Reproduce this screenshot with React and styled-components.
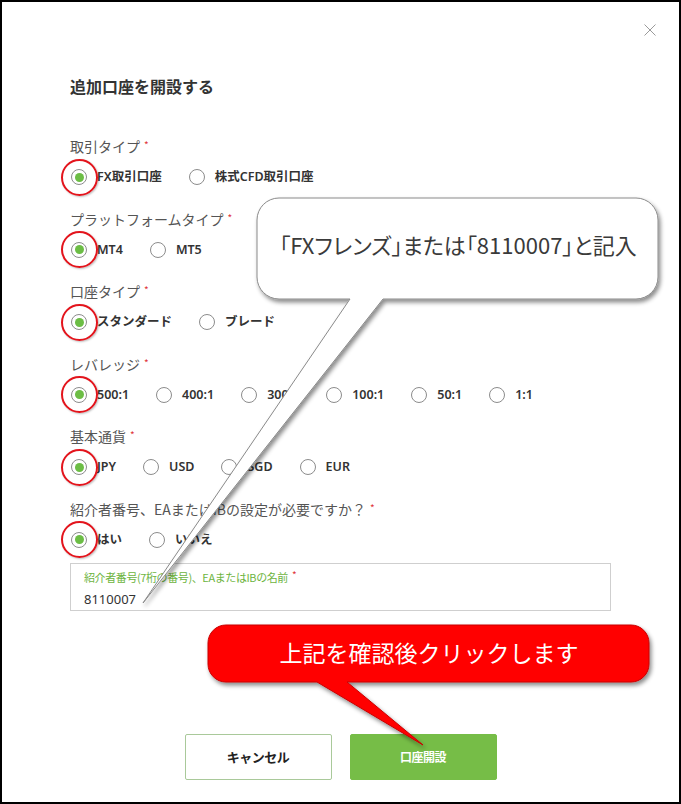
import React from "react";
import styled, { createGlobalStyle } from "styled-components";

const GlobalStyle = createGlobalStyle`
  html, body {
    margin: 0;
    padding: 0;
    background: #ffffff;
  }
  body {
    font-family: "Noto Sans", "Noto Sans CJK JP", sans-serif;
  }
`;

const Frame = styled.div`
  position: relative;
  width: 681px;
  height: 804px;
  box-sizing: border-box;
  border: 2px solid #000;
  background: #fff;
  overflow: hidden;
`;

const Modal = styled.div`
  display: flex;
  flex-direction: column;
  padding: 0 68px;
`;

const CloseRow = styled.div`
  display: flex;
  justify-content: flex-end;
  padding-top: 22px;
  margin-right: -45px;
`;

const CloseButton = styled.button`
  width: 12px;
  height: 12px;
  padding: 0;
  border: none;
  background: none;
  display: flex;
  svg {
    display: block;
  }
`;

const Title = styled.h2`
  margin: 39px 0 0;
  font-size: 16px;
  line-height: 22px;
  font-weight: 700;
  color: #333;
  font-family: "Noto Sans CJK JP", sans-serif;
`;

const Sections = styled.div`
  margin-top: 39px;
  display: flex;
  flex-direction: column;
`;

const Section = styled.div`
  display: flex;
  flex-direction: column;
  gap: 9px;
  margin-bottom: ${(p) => (p.$last ? "11px" : "19.5px")};
`;

const Label = styled.div`
  font-family: "Noto Sans CJK JP", sans-serif;
  font-size: 14px;
  line-height: 20px;
  height: 20px;
  color: #555;
`;

const Req = styled.span`
  position: relative;
  top: -3px;
  color: #e0343a;
  font-size: 10px;
  line-height: 0;
  margin-left: 4px;
`;

const RadioRow = styled.div`
  display: flex;
  align-items: center;
  height: 24px;
  gap: 27px;
  padding-left: 1px;
`;

const Option = styled.label`
  display: flex;
  align-items: center;
  gap: 10px;
  font-size: 12.5px;
  line-height: 18px;
  font-weight: 600;
  color: #333;
`;

const Circle = styled.span`
  position: relative;
  width: 16px;
  height: 16px;
  box-sizing: border-box;
  border-radius: 50%;
  border: 1px solid #8c8c8c;
  background: #fff;
  display: flex;
  align-items: center;
  justify-content: center;
  flex-shrink: 0;

  &::before {
    content: "";
    width: 9px;
    height: 9px;
    border-radius: 50%;
    background: ${(p) => (p.$checked ? "#6cbd45" : "transparent")};
  }

  &::after {
    content: "";
    display: ${(p) => (p.$marked ? "block" : "none")};
    position: absolute;
    left: 50%;
    top: 50%;
    width: 37px;
    height: 37px;
    box-sizing: border-box;
    margin: -18.5px 0 0 -18.5px;
    border-radius: 50%;
    border: 2px solid #e3141c;
    box-shadow: 1px 1px 2px rgba(0, 0, 0, 0.25);
  }
`;

const InputBox = styled.div`
  height: 48px;
  box-sizing: border-box;
  border: 1px solid #cfcfcf;
  padding: 6px 13px 0;
  display: flex;
  flex-direction: column;
`;

const InputLabel = styled.div`
  font-family: "Noto Sans CJK JP", sans-serif;
  font-size: 11px;
  line-height: 15px;
  height: 15px;
  color: #6db43e;
  letter-spacing: -0.4px;
`;

const InputValue = styled.div`
  margin-top: 5px;
  font-size: 13px;
  line-height: 18px;
  color: #333;
`;

const Buttons = styled.div`
  margin-top: 123px;
  display: flex;
  justify-content: center;
  gap: 18px;
`;

const Button = styled.button`
  width: 147px;
  height: 46px;
  box-sizing: border-box;
  border: 1px solid ${(p) => (p.$primary ? "#76bd47" : "#a9c99a")};
  background: ${(p) => (p.$primary ? "#76bd47" : "#fff")};
  color: ${(p) => (p.$primary ? "#fff" : "#222")};
  font-family: "Noto Sans CJK JP", sans-serif;
  font-size: ${(p) => (p.$primary ? "12px" : "13px")};
  font-weight: 700;
  border-radius: 2px;
  letter-spacing: -0.5px;
`;

const Overlay = styled.svg`
  position: absolute;
  left: -2px;
  top: -2px;
  width: 681px;
  height: 804px;
  pointer-events: none;
`;

const CalloutText = styled.div`
  position: absolute;
  display: flex;
  align-items: center;
  justify-content: center;
  left: ${(p) => p.$x}px;
  top: ${(p) => p.$y}px;
  width: ${(p) => p.$w}px;
  height: ${(p) => p.$h}px;
  font-family: "Noto Sans CJK JP", sans-serif;
  font-size: ${(p) => p.$size}px;
  color: ${(p) => p.$color};
  white-space: nowrap;
  pointer-events: none;
  font-feature-settings: ${(p) => (p.$palt ? '"palt"' : "normal")};
`;

const groups = [
  { label: "取引タイプ", options: ["FX取引口座", "株式CFD取引口座"] },
  { label: "プラットフォームタイプ", options: ["MT4", "MT5"] },
  { label: "口座タイプ", options: ["スタンダード", "ブレード"] },
  {
    label: "レバレッジ",
    options: ["500:1", "400:1", "300:1", "100:1", "50:1", "1:1"],
  },
  { label: "基本通貨", options: ["JPY", "USD", "SGD", "EUR"] },
  {
    label: "紹介者番号、EAまたはIBの設定が必要ですか？",
    options: ["はい", "いいえ"],
  },
];

const RadioGroup = ({ label, options, last }) => (
  <Section $last={last}>
    <Label>
      {label}
      <Req>*</Req>
    </Label>
    <RadioRow>
      {options.map((o, i) => (
        <Option key={o}>
          <Circle $checked={i === 0} $marked={i === 0} />
          {o}
        </Option>
      ))}
    </RadioRow>
  </Section>
);

const App = () => {
  return (
    <>
      <GlobalStyle />
      <Frame>
        <Modal>
          <CloseRow>
            <CloseButton aria-label="close">
              <svg width="12" height="12" viewBox="0 0 12 12">
                <path
                  d="M0.5 0.5 L11.5 11.5 M11.5 0.5 L0.5 11.5"
                  stroke="#9a9a9a"
                  strokeWidth="1"
                  fill="none"
                />
              </svg>
            </CloseButton>
          </CloseRow>
          <Title>追加口座を開設する</Title>
          <Sections>
            {groups.map((g, i) => (
              <RadioGroup
                key={g.label}
                label={g.label}
                options={g.options}
                last={i === groups.length - 1}
              />
            ))}
            <InputBox>
              <InputLabel>
                紹介者番号(7桁の番号)、EAまたはIBの名前
                <Req>*</Req>
              </InputLabel>
              <InputValue>8110007</InputValue>
            </InputBox>
          </Sections>
          <Buttons>
            <Button>キャンセル</Button>
            <Button $primary>口座開設</Button>
          </Buttons>
        </Modal>

        <Overlay viewBox="0 0 681 804">
          <defs>
            <filter id="sh" x="-10%" y="-10%" width="130%" height="130%">
              <feDropShadow dx="2" dy="3" stdDeviation="2.2" floodColor="#000" floodOpacity="0.45" />
            </filter>
          </defs>
          <path
            d="M 279 198 H 636 A 22 22 0 0 1 658 220 V 277 A 22 22 0 0 1 636 299 H 383 L 143 603 L 350 299 H 279 A 22 22 0 0 1 257 277 V 220 A 22 22 0 0 1 279 198 Z"
            fill="#fff"
            stroke="#8a8a8a"
            strokeWidth="1"
            filter="url(#sh)"
          />
          <path
            d="M 226 625 H 631 A 18 18 0 0 1 649 643 V 664 A 18 18 0 0 1 631 682 H 347 L 423 745 L 317 682 H 226 A 18 18 0 0 1 208 664 V 643 A 18 18 0 0 1 226 625 Z"
            fill="#ff0000"
            stroke="#c80000"
            strokeWidth="1"
            filter="url(#sh)"
          />
        </Overlay>
        <CalloutText $x={255} $y={221} $w={402} $h={42} $size={22} $color="#3a3a3a" $palt>
          「FXフレンズ」または「8110007」と記入
        </CalloutText>
        <CalloutText $x={206} $y={629} $w={442} $h={42} $size={23} $color="#fff">
          上記を確認後クリックします
        </CalloutText>
      </Frame>
    </>
  );
};

export default App;
